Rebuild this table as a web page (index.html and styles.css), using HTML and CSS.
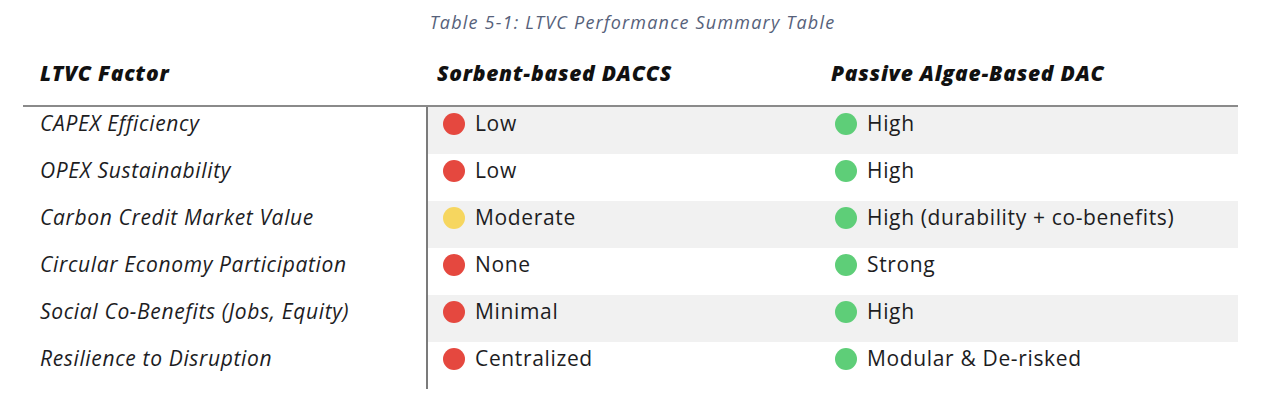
FILE: index.html
```html
<!DOCTYPE html>
<html>
<head>
<meta charset="utf-8">
<link rel="stylesheet" href="styles.css">
</head>
<body>
<div class="wrap">
  <p class="caption">Table 5-1: LTVC Performance Summary Table</p>
  <table class="ltvc">
    <thead>
      <tr>
        <th class="c1">LTVC Factor</th>
        <th class="c2">Sorbent-based DACCS</th>
        <th class="c3">Passive Algae-Based DAC</th>
      </tr>
    </thead>
    <tbody>
      <tr class="alt">
        <td class="factor">CAPEX Efficiency</td>
        <td class="val"><span class="dot red"></span>Low</td>
        <td class="val"><span class="dot green"></span>High</td>
      </tr>
      <tr>
        <td class="factor">OPEX Sustainability</td>
        <td class="val"><span class="dot red"></span>Low</td>
        <td class="val"><span class="dot green"></span>High</td>
      </tr>
      <tr class="alt">
        <td class="factor">Carbon Credit Market Value</td>
        <td class="val"><span class="dot yellow"></span>Moderate</td>
        <td class="val"><span class="dot green"></span>High (durability + co-benefits)</td>
      </tr>
      <tr>
        <td class="factor">Circular Economy Participation</td>
        <td class="val"><span class="dot red"></span>None</td>
        <td class="val"><span class="dot green"></span>Strong</td>
      </tr>
      <tr class="alt">
        <td class="factor">Social Co-Benefits (Jobs, Equity)</td>
        <td class="val"><span class="dot red"></span>Minimal</td>
        <td class="val"><span class="dot green"></span>High</td>
      </tr>
      <tr>
        <td class="factor">Resilience to Disruption</td>
        <td class="val"><span class="dot red"></span>Centralized</td>
        <td class="val"><span class="dot green"></span>Modular &amp; De-risked</td>
      </tr>
    </tbody>
  </table>
</div>
</body>
</html>
```
FILE: styles.css
```css
html, body {
  margin: 0;
  padding: 0;
  background: #ffffff;
}
body {
  font-family: "Open Sans", Lato, sans-serif;
  color: #1d1d1f;
}
.wrap {
  padding: 10px 26px 0 23px;
}
.caption {
  margin: 0;
  text-align: center;
  font-style: italic;
  font-weight: 400;
  font-size: 18px;
  line-height: 24px;
  letter-spacing: 1.2px;
  color: #56617a;
  padding-left: 4px;
}
.ltvc {
  border-collapse: collapse;
  width: 1215px;
  table-layout: fixed;
  margin-top: 20px;
}
.ltvc th {
  text-align: left;
  font-style: italic;
  font-weight: 800;
  font-size: 21px;
  line-height: 26px;
  letter-spacing: 0.75px;
  padding: 6px 0 19px 0;
  border-bottom: 2px solid #8a8a8a;
  color: #111;
}
.ltvc th.c1 { width: 387px; padding-left: 17px; }
.ltvc th.c2 { width: 383px; padding-left: 10px; }
.ltvc th.c3 { padding-left: 11px; }
.ltvc td {
  height: 46px;
  padding: 0;
  vertical-align: top;
  font-size: 21px;
  line-height: 30px;
  letter-spacing: 0.65px;
  padding-top: 1px;
}
.ltvc td.factor {
  font-style: italic;
  padding-left: 17px;
  border-right: 2px solid #7b7b7b;
  background: #ffffff;
}
.ltvc td.val {
  padding-left: 15px;
}
.ltvc tr.alt td.val {
  background: #f1f1f1;
}
.dot {
  display: inline-block;
  width: 22px;
  height: 22px;
  border-radius: 50%;
  vertical-align: -4px;
  margin-right: 10px;
}
.red { background: #e5483f; }
.yellow { background: #f6d65f; }
.green { background: #5ece78; }
```
